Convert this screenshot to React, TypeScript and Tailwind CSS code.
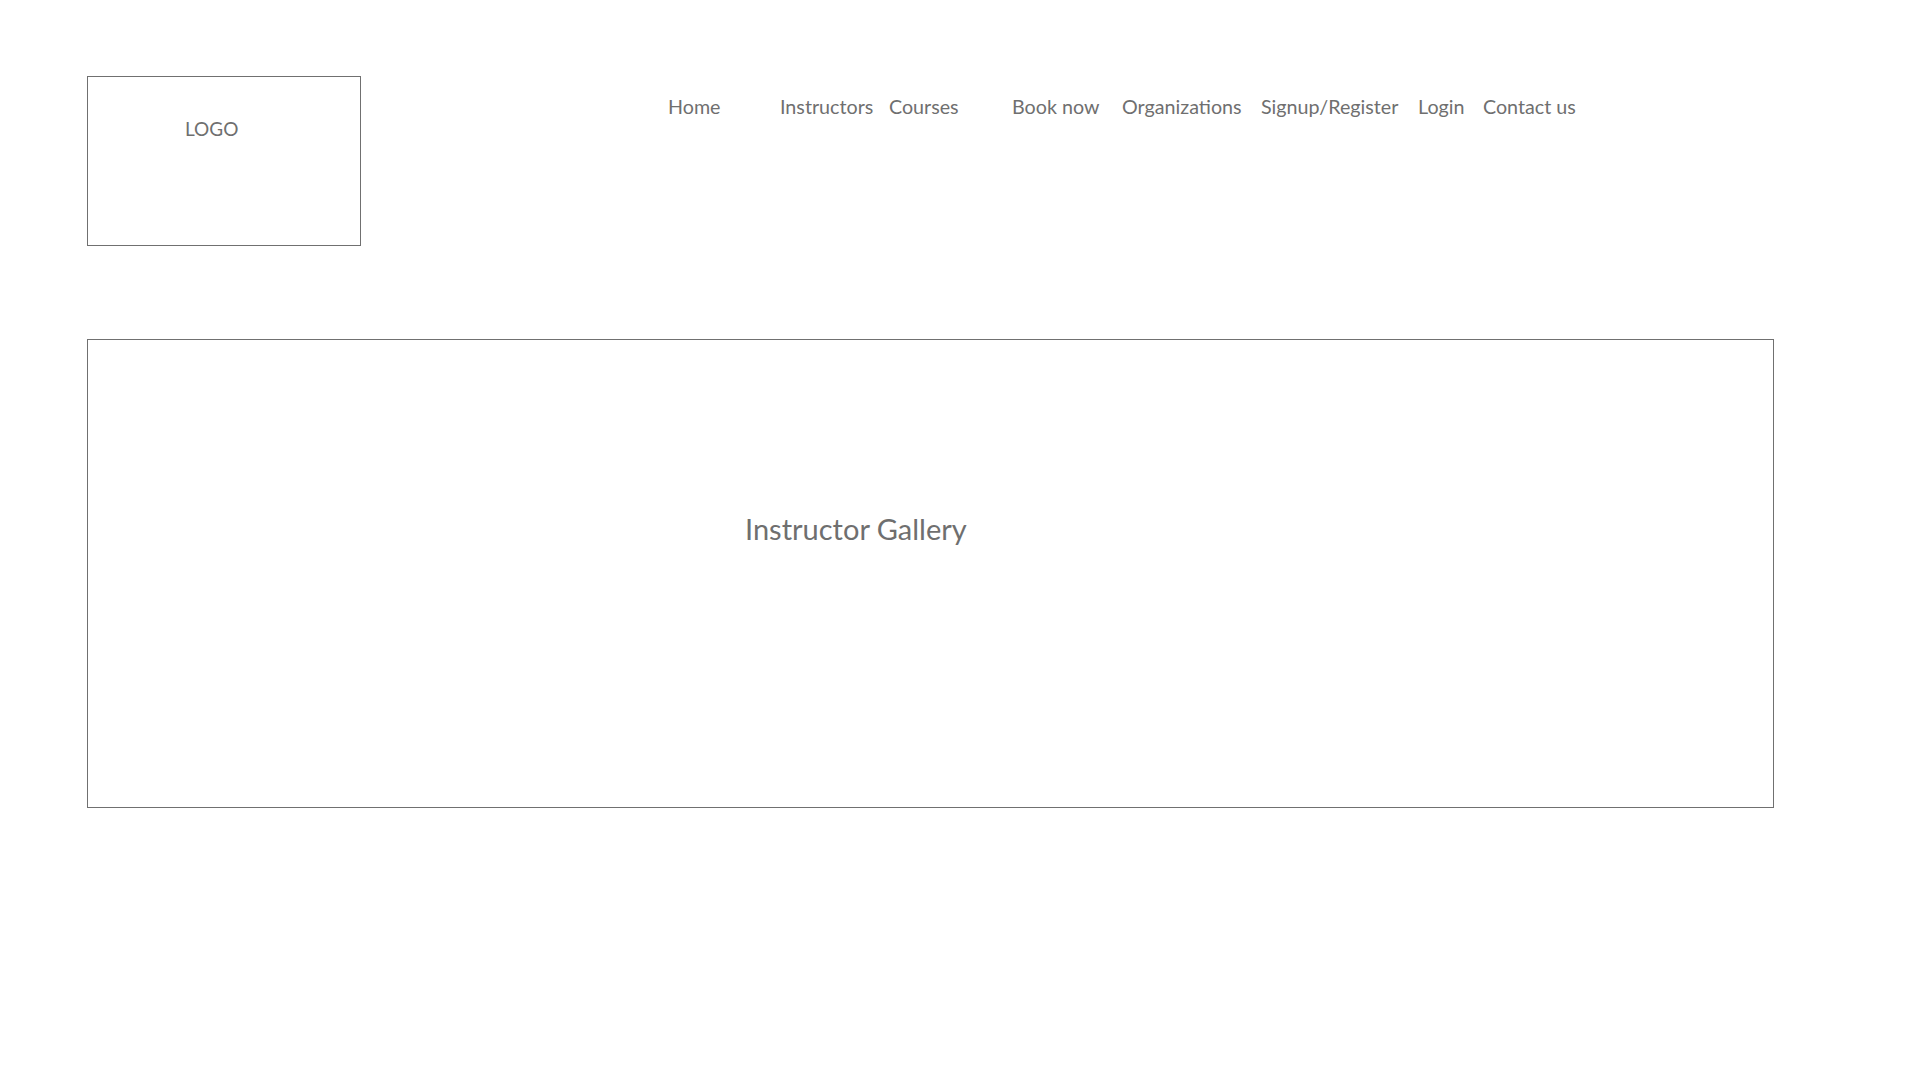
import React from "react";

const nav: { label: string; w: string }[] = [
  { label: "Home", w: "w-[112px]" },
  { label: "Instructors", w: "w-[109px]" },
  { label: "Courses", w: "w-[123px]" },
  { label: "Book now", w: "w-[110px]" },
  { label: "Organizations", w: "w-[139px]" },
  { label: "Signup/Register", w: "w-[157px]" },
  { label: "Login", w: "w-[65px]" },
  { label: "Contact us", w: "w-auto" },
];

export default function App() {
  return (
    <div
      className="w-[1920px] h-[1080px] bg-white text-[#6f6f6f] pl-[87px]"
      style={{ fontFamily: "Lato, 'Open Sans', sans-serif" }}
    >
      <div className="flex items-start">
        <div className="mt-[76px] w-[274px] h-[170px] border border-[#707070] pl-[97px] pt-[41px]">
          <div className="text-[19px] leading-[22.8px]">LOGO</div>
        </div>
        <nav className="ml-[307px] mt-[95px] flex">
          {nav.map((n) => (
            <div key={n.label} className={`${n.w} text-[19.7px] leading-[24px] whitespace-nowrap`}>
              {n.label}
            </div>
          ))}
        </nav>
      </div>
      <div className="mt-[93px] w-[1687px] h-[469px] border border-[#707070] pl-[657px] pt-[171px]">
        <div className="text-[29px] leading-[35px]">Instructor Gallery</div>
      </div>
    </div>
  );
}
